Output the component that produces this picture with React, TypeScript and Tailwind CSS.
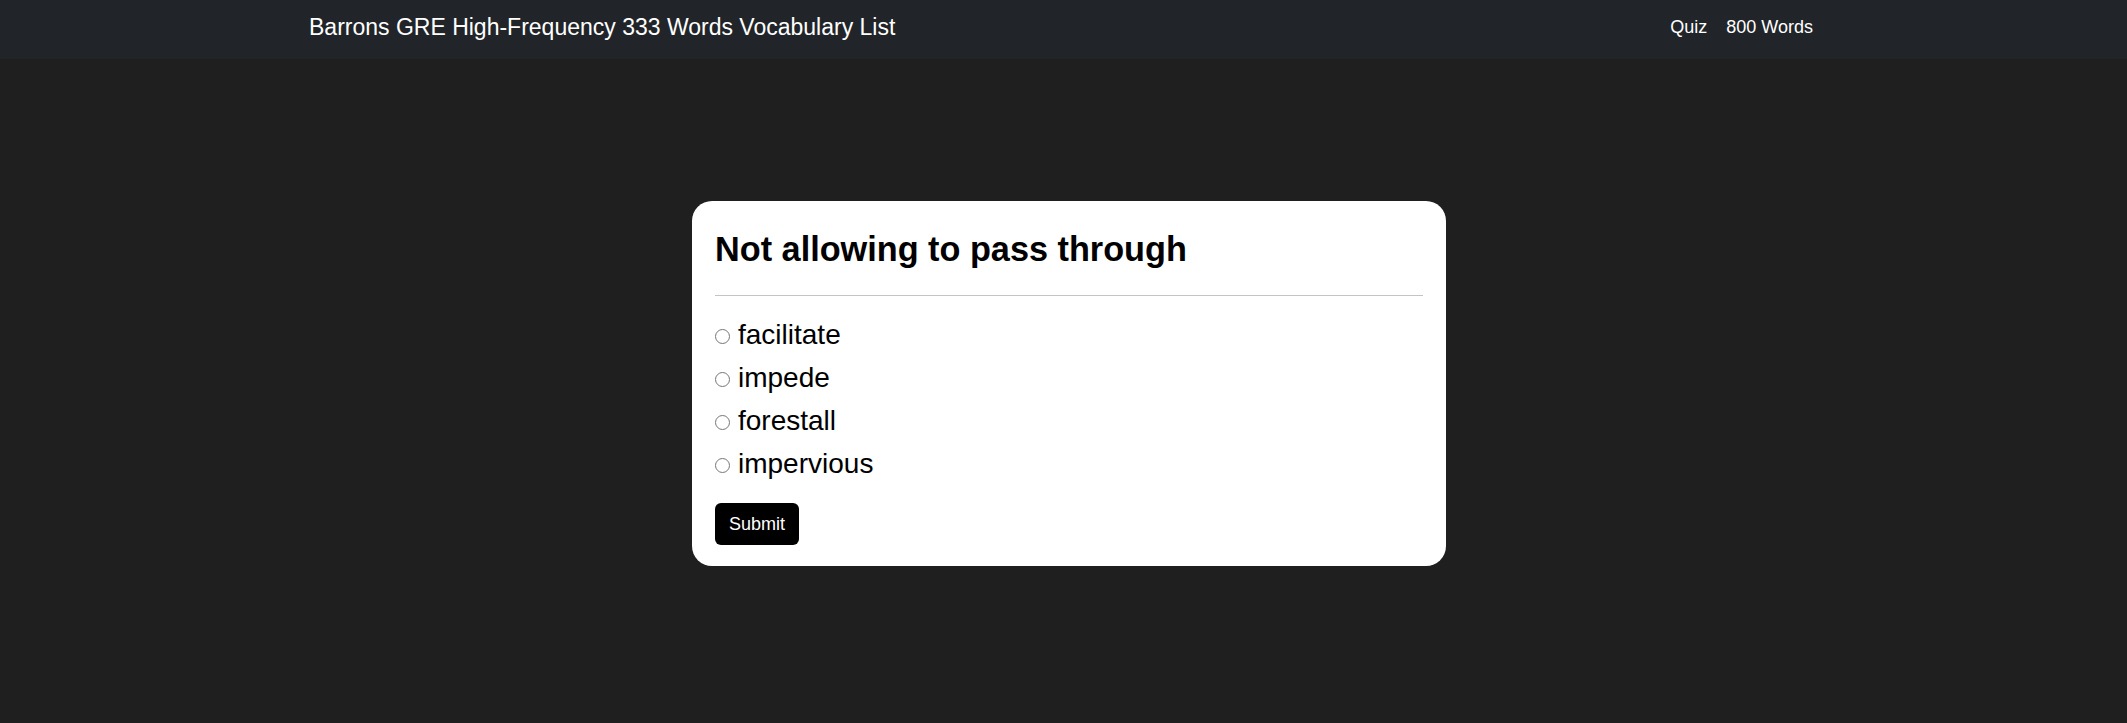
import React from 'react';

const OPTIONS = ['facilitate', 'impede', 'forestall', 'impervious'];

const App: React.FC = () => {
  return (
    <div className="min-h-screen bg-[#1f1f1f] font-['Liberation_Sans',Arial,sans-serif]">
      <nav className="h-[59px] bg-[#212529] flex items-center justify-between pl-[309px] pr-[314px] pb-[4px] text-white">
        <span className="text-[23px]">Barrons GRE High-Frequency 333 Words Vocabulary List</span>
        <div className="flex gap-[19px] text-[18px]">
          <a href="#" className="text-white">Quiz</a>
          <a href="#" className="text-white">800 Words</a>
        </div>
      </nav>
      <div className="flex justify-center pt-[142px] pl-[11px]">
        <div className="w-[754px] bg-white rounded-[20px] px-[23px] pt-[24px] pb-[21px] text-black">
          <h2 className="mt-[5px] text-[34.25px] leading-[38px] font-bold">Not allowing to pass through</h2>
          <div className="mt-[27px] h-px bg-[#c4c4c4]"></div>
          <div className="mt-[17px]">
            {OPTIONS.map(opt => (
              <label key={opt} className="block text-[28px] leading-[43px]">
                <span className="inline-block w-[15px] h-[15px] rounded-full border border-[#767676] bg-white mr-[8px]"></span>
                {opt}
              </label>
            ))}
          </div>
          <button className="mt-[18px] h-[42px] px-[14px] bg-black text-white text-[18px] rounded-[6px]">
            Submit
          </button>
        </div>
      </div>
    </div>
  );
};

export default App;
